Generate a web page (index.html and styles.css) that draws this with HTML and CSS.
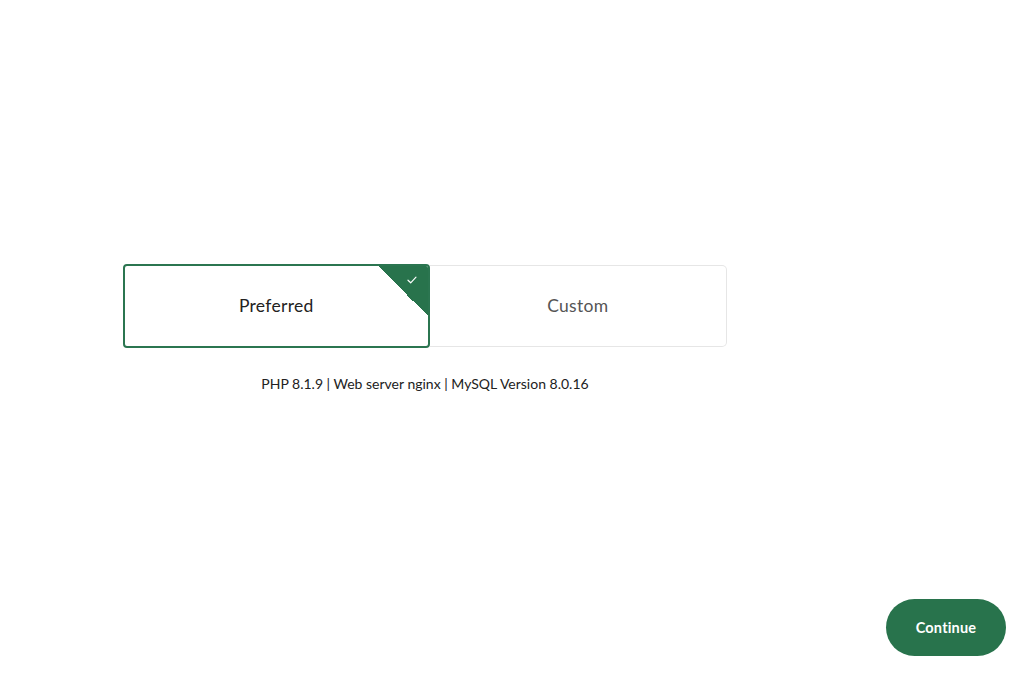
FILE: index.html
```html
<!DOCTYPE html>
<html>
<head>
<meta charset="utf-8">
<link rel="stylesheet" href="styles.css">
</head>
<body>
<div class="page">
  <main class="main">
    <div class="options">
      <div class="option option-selected">
        <span class="option-label">Preferred</span>
        <span class="corner">
          <svg class="check" width="10" height="8" viewBox="0 0 10 8"><path d="M1 4.2 L3.7 6.8 L9 1.2" fill="none" stroke="#fff" stroke-width="1.2" stroke-linecap="round" stroke-linejoin="round"/></svg>
        </span>
      </div>
      <div class="option option-plain">
        <span class="option-label muted">Custom</span>
      </div>
    </div>
    <p class="info">PHP 8.1.9 | Web server nginx | MySQL Version 8.0.16</p>
  </main>
  <footer class="footer">
    <button class="btn">Continue</button>
  </footer>
</div>
</body>
</html>
```

FILE: styles.css
```css
* { box-sizing: border-box; }
html, body { margin: 0; padding: 0; background: #fff; }
body { font-family: Lato, "Noto Sans", sans-serif; color: #222; }
.page {
  height: 676px;
  display: flex;
  flex-direction: column;
}
.main {
  flex: 1;
  padding-top: 264px;
  padding-left: 123px;
}
.options {
  display: flex;
  align-items: center;
  width: 604px;
}
.option {
  display: flex;
  align-items: center;
  justify-content: center;
  position: relative;
  overflow: hidden;
}
.option-selected {
  width: 307px;
  height: 84px;
  border: 2px solid #2b7550;
  border-radius: 4px;
  z-index: 1;
}
.option-plain {
  width: 298px;
  height: 82px;
  border: 1px solid #e6e6e6;
  border-left: none;
  border-radius: 0 5px 5px 0;
}
.option-label {
  font-size: 17.5px;
  letter-spacing: 0.3px;
  color: #222;
  margin-top: -2px;
}
.option-label.muted { color: #555; }
.corner {
  position: absolute;
  top: 0;
  right: 0;
  width: 50px;
  height: 50px;
  background: linear-gradient(to bottom left, #28734c 50%, transparent 50%);
}
.check {
  position: absolute;
  top: 10px;
  right: 11px;
}
.info {
  margin: 27px 0 0;
  width: 604px;
  text-align: center;
  font-size: 14px;
  letter-spacing: 0;
  color: #222;
}
.footer {
  display: flex;
  justify-content: flex-end;
  padding: 0 13px 20px 0;
}
.btn {
  width: 120px;
  height: 57px;
  border: none;
  border-radius: 29px;
  background: #28734c;
  color: #fff;
  font-family: Lato, "Noto Sans", sans-serif;
  font-weight: 700;
  font-size: 14.5px;
  letter-spacing: 0.2px;
  cursor: pointer;
}
```
